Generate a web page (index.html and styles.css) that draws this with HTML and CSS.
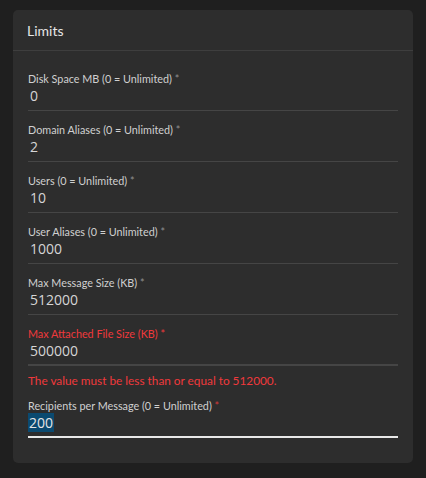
FILE: index.html
```html
<!DOCTYPE html>
<html>
<head>
<meta charset="utf-8">
<link rel="stylesheet" href="styles.css">
</head>
<body>
<div class="card">
  <div class="card-header">Limits</div>
  <div class="card-body">
    <div class="field">
      <div class="label">Disk Space MB (0 = Unlimited) <span class="req">*</span></div>
      <div class="value">0</div>
    </div>
    <div class="field">
      <div class="label">Domain Aliases (0 = Unlimited) <span class="req">*</span></div>
      <div class="value">2</div>
    </div>
    <div class="field">
      <div class="label">Users (0 = Unlimited) <span class="req">*</span></div>
      <div class="value">10</div>
    </div>
    <div class="field">
      <div class="label">User Aliases (0 = Unlimited) <span class="req">*</span></div>
      <div class="value">1000</div>
    </div>
    <div class="field">
      <div class="label">Max Message Size (KB) <span class="req">*</span></div>
      <div class="value">512000</div>
    </div>
    <div class="field invalid">
      <div class="label">Max Attached File Size (KB) <span class="req">*</span></div>
      <div class="value">500000</div>
      <div class="error">The value must be less than or equal to 512000.</div>
    </div>
    <div class="field focused">
      <div class="label">Recipients per Message (0 = Unlimited) <span class="req">*</span></div>
      <div class="value"><span class="sel">200</span></div>
    </div>
  </div>
</div>
</body>
</html>
```

FILE: styles.css
```css
html, body {
  margin: 0;
  padding: 0;
  background: #1f1f1f;
  font-family: "Open Sans", "Noto Sans", sans-serif;
}
body {
  padding: 10px 13px 15px 13px;
}
.card {
  width: 400px;
  background: #2d2d2d;
  border-radius: 5px;
  box-sizing: border-box;
}
.card-header {
  height: 41px;
  box-sizing: border-box;
  padding: 0 14px;
  display: flex;
  align-items: center;
  font-family: "Lato", sans-serif;
  font-size: 14px;
  color: #e6e6e6;
  border-bottom: 1px solid #3e3e3e;
}
.card-body {
  padding: 20px 15px 25px 15px;
}
.field + .field {
  margin-top: 11px;
}
.label {
  font-family: "Lato", sans-serif;
  font-size: 10.8px;
  line-height: 15px;
  color: #d0d0d0;
  white-space: nowrap;
}
.req {
  color: #8e8e8e;
}
.value {
  font-size: 14px;
  line-height: 19px;
  padding: 0 0 5px 2px;
  color: #d6d6d6;
  border-bottom: 1px solid #454545;
}
.invalid .label,
.invalid .req {
  color: #f0393c;
}
.invalid .value {
  border-bottom: 2px solid #454545;
  padding-bottom: 4px;
}
.error {
  margin-top: 7px;
  font-family: "Lato", sans-serif;
  font-size: 11.8px;
  line-height: 16px;
  color: #f0393c;
}
.invalid + .field {
  margin-top: 9px;
}
.focused .req {
  color: #d23a3a;
}
.focused .value {
  border-bottom: 2px solid #e8e8e8;
  padding-bottom: 4px;
  padding-left: 0;
}
.sel {
  background: #0b4a70;
  color: #e6e6e6;
  padding: 0 1px;
}
```
